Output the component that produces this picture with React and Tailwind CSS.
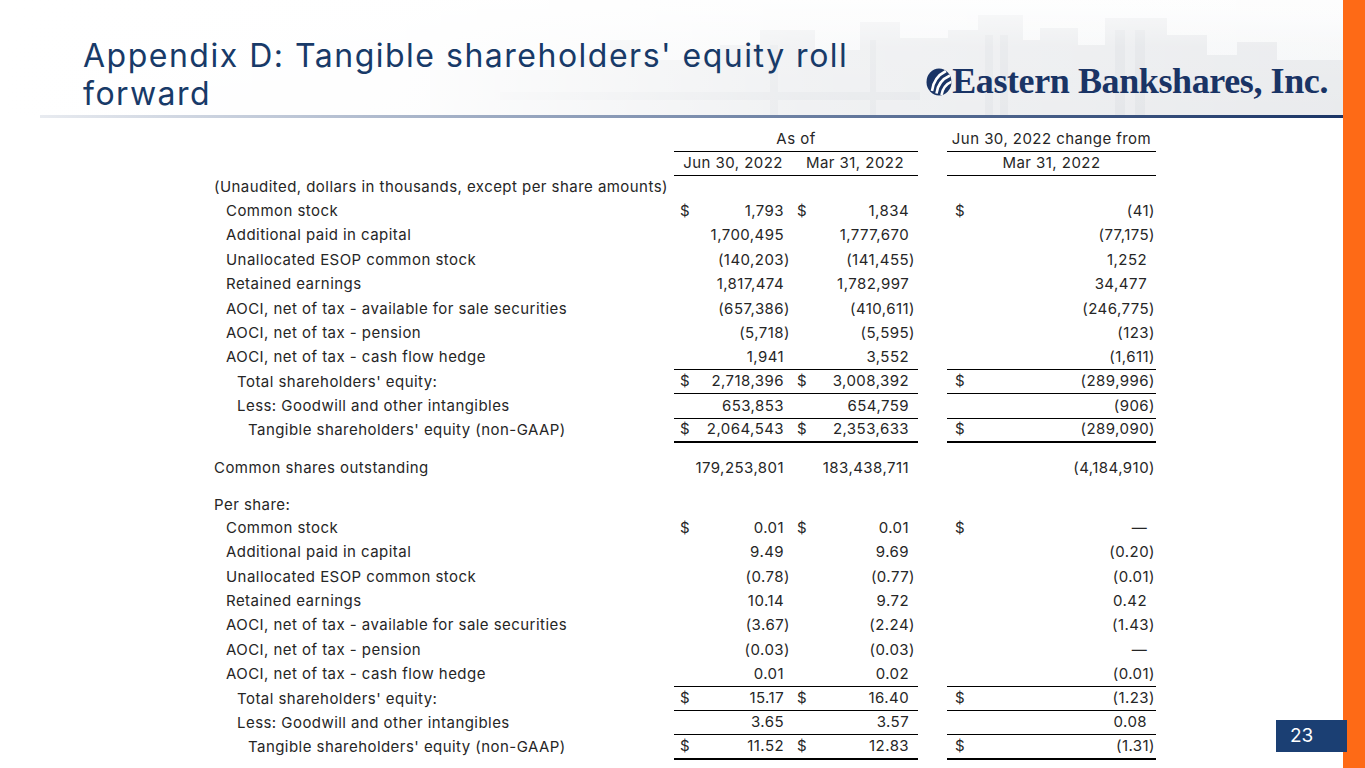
import React from "react";

const top = [
  { label: "Common stock", indent: 1, dollar: true, v: ["1,793", "1,834", "(41)"] },
  { label: "Additional paid in capital", indent: 1, v: ["1,700,495", "1,777,670", "(77,175)"] },
  { label: "Unallocated ESOP common stock", indent: 1, v: ["(140,203)", "(141,455)", "1,252"] },
  { label: "Retained earnings", indent: 1, v: ["1,817,474", "1,782,997", "34,477"] },
  { label: "AOCI, net of tax - available for sale securities", indent: 1, v: ["(657,386)", "(410,611)", "(246,775)"] },
  { label: "AOCI, net of tax - pension", indent: 1, v: ["(5,718)", "(5,595)", "(123)"] },
  { label: "AOCI, net of tax - cash flow hedge", indent: 1, line: true, v: ["1,941", "3,552", "(1,611)"] },
  { label: "Total shareholders' equity:", indent: 2, dollar: true, line: true, v: ["2,718,396", "3,008,392", "(289,996)"] },
  { label: "Less: Goodwill and other intangibles", indent: 2, line: true, v: ["653,853", "654,759", "(906)"] },
  { label: "Tangible shareholders' equity (non-GAAP)", indent: 3, dollar: true, line: "thick", v: ["2,064,543", "2,353,633", "(289,090)"] },
];

const perShare = [
  { label: "Common stock", indent: 1, dollar: true, v: ["0.01", "0.01", "—"] },
  { label: "Additional paid in capital", indent: 1, v: ["9.49", "9.69", "(0.20)"] },
  { label: "Unallocated ESOP common stock", indent: 1, v: ["(0.78)", "(0.77)", "(0.01)"] },
  { label: "Retained earnings", indent: 1, v: ["10.14", "9.72", "0.42"] },
  { label: "AOCI, net of tax - available for sale securities", indent: 1, v: ["(3.67)", "(2.24)", "(1.43)"] },
  { label: "AOCI, net of tax - pension", indent: 1, v: ["(0.03)", "(0.03)", "—"] },
  { label: "AOCI, net of tax - cash flow hedge", indent: 1, line: true, v: ["0.01", "0.02", "(0.01)"] },
  { label: "Total shareholders' equity:", indent: 2, dollar: true, line: true, v: ["15.17", "16.40", "(1.23)"] },
  { label: "Less: Goodwill and other intangibles", indent: 2, line: true, v: ["3.65", "3.57", "0.08"] },
  { label: "Tangible shareholders' equity (non-GAAP)", indent: 3, dollar: true, line: "thick", v: ["11.52", "12.83", "(1.31)"] },
];

const indents = ["pl-0", "pl-[12px]", "pl-[23px]", "pl-[34px]"];

const Num = ({ v }) => (
  <span className="whitespace-nowrap">
    {v}
    {!v.endsWith(")") && <span className="invisible">)</span>}
  </span>
);

const Row = ({ r, h = "h-[24.4px]" }) => {
  const line = r.line === "thick" ? "border-b-2 border-black" : r.line ? "border-b border-black" : "";
  return (
    <div className={`flex ${h}`}>
      <div className={`w-[460px] flex items-center whitespace-nowrap ${indents[r.indent || 0]}`}>{r.label}</div>
      <div className={`w-[118px] flex items-center justify-between pl-[6px] pr-[2px] ${line}`}>
        <span>{r.dollar ? "$" : ""}</span>
        {r.v && <Num v={r.v[0]} />}
      </div>
      <div className={`w-[126px] flex items-center justify-between pl-[5px] pr-[3px] ${line}`}>
        <span>{r.dollar ? "$" : ""}</span>
        {r.v && <Num v={r.v[1]} />}
      </div>
      <div className="w-[29px]" />
      <div className={`w-[209px] flex items-center justify-between pl-[8px] pr-[1px] ${line}`}>
        <span>{r.dollar ? "$" : ""}</span>
        {r.v && (
          <span className="flex">
            <Num v={r.v[2]} />
            {!r.v[2].endsWith(")") && <span className="w-[2px]" />}
          </span>
        )}
      </div>
    </div>
  );
};

const Skyline = () => (
  <svg className="absolute inset-0" width="1343" height="115" viewBox="0 0 1343 115">
    <defs>
      <linearGradient id="fadeL" x1="0" x2="1" y1="0" y2="0">
        <stop offset="0" stopColor="#ffffff" stopOpacity="1" />
        <stop offset="0.3" stopColor="#ffffff" stopOpacity="0.92" />
        <stop offset="0.6" stopColor="#ffffff" stopOpacity="0.45" />
        <stop offset="1" stopColor="#ffffff" stopOpacity="0.2" />
      </linearGradient>
      <linearGradient id="fadeT" x1="0" x2="0" y1="0" y2="1">
        <stop offset="0" stopColor="#ffffff" stopOpacity="0.7" />
        <stop offset="0.4" stopColor="#ffffff" stopOpacity="0.1" />
        <stop offset="1" stopColor="#ffffff" stopOpacity="0" />
      </linearGradient>
      <linearGradient id="sky" x1="0" x2="0" y1="0" y2="1">
        <stop offset="0" stopColor="#f8f9fa" />
        <stop offset="1" stopColor="#eff1f3" />
      </linearGradient>
    </defs>
    <rect width="1343" height="115" fill="url(#sky)" />
    <g fill="#e4e6e9">
      <rect x="430" y="70" width="140" height="45" />
      <rect x="560" y="55" width="60" height="60" />
      <rect x="610" y="40" width="30" height="75" />
      <rect x="640" y="60" width="90" height="55" />
      <rect x="720" y="45" width="40" height="70" />
      <rect x="760" y="30" width="55" height="85" />
      <rect x="810" y="50" width="50" height="65" />
      <rect x="860" y="22" width="40" height="93" />
      <rect x="900" y="38" width="50" height="77" />
      <rect x="948" y="30" width="30" height="85" />
      <rect x="978" y="15" width="45" height="100" />
      <rect x="1022" y="40" width="18" height="75" />
      <rect x="1040" y="28" width="38" height="87" />
      <rect x="1078" y="45" width="30" height="70" />
      <rect x="1105" y="18" width="62" height="97" />
      <rect x="1167" y="35" width="40" height="80" />
      <rect x="1207" y="55" width="30" height="60" />
      <rect x="1237" y="42" width="40" height="73" />
      <rect x="1277" y="60" width="66" height="55" />
    </g>
    <g fill="#dadde1">
      <rect x="985" y="35" width="8" height="80" />
      <rect x="1000" y="35" width="8" height="80" />
      <rect x="1115" y="30" width="10" height="85" />
      <rect x="1135" y="30" width="10" height="85" />
      <rect x="870" y="40" width="6" height="75" />
      <rect x="770" y="45" width="8" height="70" />
      <rect x="500" y="92" width="420" height="8" />
    </g>
    <rect width="1343" height="115" fill="url(#fadeT)" />
    <rect width="1343" height="115" fill="url(#fadeL)" />
  </svg>
);

const Logo = () => (
  <div className="flex items-center text-[#1a3465]">
    <svg width="26" height="28" viewBox="0 0 26 28" className="mt-[2px]">
      <defs>
        <clipPath id="lc">
          <ellipse cx="13" cy="14" rx="12.5" ry="13.5" />
        </clipPath>
      </defs>
      <ellipse cx="13" cy="14" rx="12.5" ry="13.5" fill="#1a3465" />
      <g clipPath="url(#lc)" stroke="#fff" strokeWidth="2.6" fill="none">
        <path d="M6 23 C7 14 12 7 20 3" />
        <path d="M10.5 25.5 C11.5 17 16 11 24 7.5" />
        <path d="M15.5 27 C16.5 21 19.5 16 27 13" />
      </g>
    </svg>
    <span className="font-['Liberation_Serif',serif] font-bold text-[36px] leading-none tracking-[-0.4px]">
      Eastern Bankshares, Inc.
    </span>
  </div>
);

export default function App() {
  return (
    <div className="w-[1365px] h-[768px] flex bg-white overflow-hidden font-['Inter',sans-serif] text-[#262626]">
      <div className="relative w-[1343px] flex flex-col">
        <header className="relative h-[115px]">
          <Skyline />
          <div className="relative flex items-start justify-between h-full">
            <h1 className="pl-[83px] pt-[37px] text-[32px] leading-[38px] text-[#183a68] font-normal tracking-[1.5px] whitespace-nowrap">
              <span className="block">Appendix D: Tangible shareholders' equity roll</span>
              <span className="block">forward</span>
            </h1>
            <div className="pt-[63px] pr-[15px]">
              <Logo />
            </div>
          </div>
        </header>
        <div className="ml-[40px] h-[3px] bg-gradient-to-r from-[#e8ebf0] via-[#7d8fae] to-[#1a3465]" />

        <div className="pl-[214px] pt-[10px] text-[15px] tracking-[0.45px]">
          <div className="flex h-[24px]">
            <div className="w-[460px]" />
            <div className="w-[244px] flex items-center justify-center border-b border-black">As of</div>
            <div className="w-[29px]" />
            <div className="w-[209px] flex items-center justify-center border-b border-black whitespace-nowrap">Jun 30, 2022 change from</div>
          </div>
          <div className="flex h-[24px]">
            <div className="w-[460px]" />
            <div className="w-[118px] flex items-center justify-center border-b border-black whitespace-nowrap">Jun 30, 2022</div>
            <div className="w-[126px] flex items-center justify-center border-b border-black whitespace-nowrap">Mar 31, 2022</div>
            <div className="w-[29px]" />
            <div className="w-[209px] flex items-center justify-center border-b border-black">Mar 31, 2022</div>
          </div>
          <Row r={{ label: "(Unaudited, dollars in thousands, except per share amounts)" }} h="h-[23px]" />
          {top.map((r, i) => (
            <Row key={i} r={r} />
          ))}
          <div className="h-[13px]" />
          <Row r={{ label: "Common shares outstanding", v: ["179,253,801", "183,438,711", "(4,184,910)"] }} h="h-[24px]" />
          <div className="h-[14px]" />
          <Row r={{ label: "Per share:" }} h="h-[22px]" />
          {perShare.map((r, i) => (
            <Row key={i} r={r} h="h-[24.4px]" />
          ))}
        </div>

        <div className="absolute left-[1276px] top-[720px] w-[71px] h-[32px] bg-[#1b3f73] text-white text-[19px] flex items-center pl-[14px]">
          23
        </div>
      </div>
      <div className="w-[22px] h-full bg-[#fe6a16]" />
    </div>
  );
}
